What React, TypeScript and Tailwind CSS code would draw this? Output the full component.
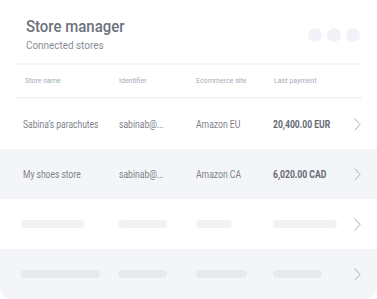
import React from "react";

const Chevron = () => (
  <svg width="7" height="13" viewBox="0 0 7 13" fill="none" className="block">
    <polyline points="1,1 6,6.5 1,12" stroke="#a9adb2" strokeWidth="1" fill="none" strokeLinecap="round" strokeLinejoin="round" />
  </svg>
);

const N = ({ children, s = "scale-x-[0.88]" }: { children: React.ReactNode; s?: string }) => (
  <span className={`inline-block origin-left whitespace-nowrap ${s}`}>{children}</span>
);

type Row = { name: string; id: string; site: string; pay: string };

const rows: Row[] = [
  { name: "Sabina’s parachutes", id: "sabinab@...", site: "Amazon EU", pay: "20,400.00 EUR" },
  { name: "My shoes store", id: "sabinab@...", site: "Amazon CA", pay: "6,020.00 CAD" },
];

const skeletons: number[][] = [
  [64, 49, 36, 64],
  [79, 49, 51, 49],
];

export default function App() {
  return (
    <div
      className="w-[377px] h-[299px] bg-white rounded-b-[12px] overflow-hidden flex flex-col"
      style={{ fontFamily: "Roboto, 'Noto Sans', sans-serif" }}
    >
      <div className="flex items-center justify-between pl-[26px] pr-[17px] pt-[16px]">
        <div className="flex flex-col">
          <div className="text-[17px] leading-[20px] font-medium text-[#6b727c]">
            <N>Store manager</N>
          </div>
          <div className="text-[11px] leading-[16px] mt-[2px] text-[#878d96]">
            <N s="scale-x-[0.9]">Connected stores</N>
          </div>
        </div>
        <div className="flex gap-[5px]">
          <div className="w-[14px] h-[14px] rounded-full bg-[#f1f3f8]" />
          <div className="w-[14px] h-[14px] rounded-full bg-[#f1f3f8]" />
          <div className="w-[14px] h-[14px] rounded-full bg-[#f1f3f8]" />
        </div>
      </div>
      <div className="mt-[9px] mx-[15px] h-[2px] bg-[#f3f4f8]" />
      <div className="h-[32px] grid grid-cols-[94px_77px_78px_1fr] items-center pl-[25px] text-[8px] text-[#a3adb8]">
        <div><N>Store name</N></div>
        <div><N>Identifier</N></div>
        <div><N>Ecommerce site</N></div>
        <div><N>Last payment</N></div>
      </div>
      <div className="mx-[15px] h-[2px] bg-[#f3f4f8]" />
      {rows.map((r, i) => (
        <div
          key={i}
          className={`h-[50px] grid grid-cols-[96px_77px_77px_1fr_auto] items-center pl-[23px] pr-[16px] text-[10px] text-[#7d828a] ${i === 1 ? "bg-[#f4f5f8]" : "bg-white"}`}
        >
          <div><N s="scale-x-[0.85]">{r.name}</N></div>
          <div><N s="scale-x-[0.86]">{r.id}</N></div>
          <div><N s="scale-x-[0.86]">{r.site}</N></div>
          <div className="font-bold text-[#646a73]"><N s="scale-x-[0.86]">{r.pay}</N></div>
          <Chevron />
        </div>
      ))}
      {skeletons.map((s, i) => (
        <div
          key={i}
          className={`h-[50px] grid grid-cols-[97px_78px_77px_1fr_auto] items-center pl-[21px] pr-[16px] ${i === 1 ? "bg-[#f4f5f8]" : "bg-white"}`}
        >
          {s.map((w, j) => (
            <div
              key={j}
              className={`h-[8px] rounded-full ${i === 1 ? "bg-[#e7e9ec]" : "bg-[#f1f2f4]"}`}
              style={{ width: w }}
            />
          ))}
          <Chevron />
        </div>
      ))}
    </div>
  );
}
